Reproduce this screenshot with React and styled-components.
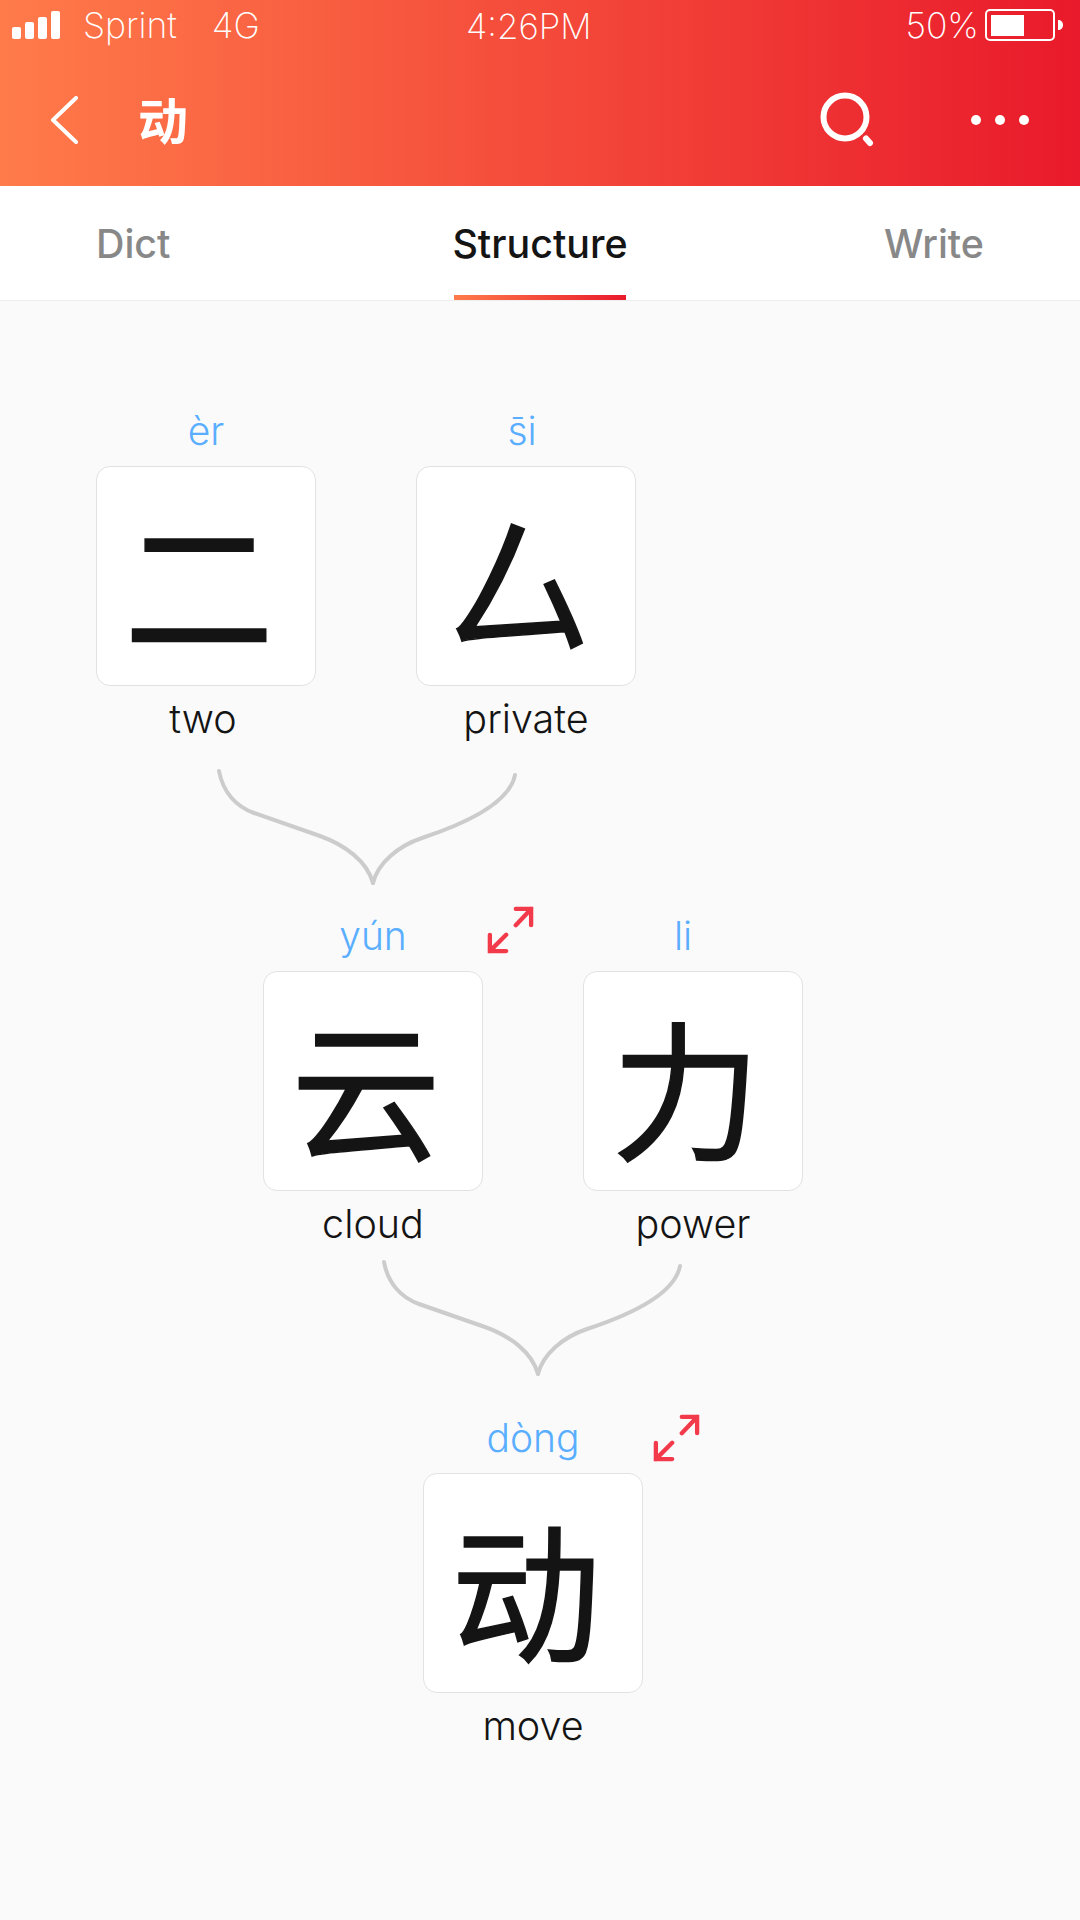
import React from 'react';
import styled, { createGlobalStyle } from 'styled-components';

const GlobalStyle = createGlobalStyle`
  html, body {
    margin: 0;
    padding: 0;
    background: #fafafa;
  }
  * {
    box-sizing: border-box;
  }
`;

const Page = styled.div`
  width: 1080px;
  height: 1920px;
  overflow: hidden;
  background: #fafafa;
  font-family: Inter, "Liberation Sans", "Noto Sans CJK SC", sans-serif;
`;

const Header = styled.header`
  height: 186px;
  background: linear-gradient(90deg, #ff7b4a 0%, #e91a2b 100%);
  color: #fff;
`;

const StatusBar = styled.div`
  height: 50px;
  display: grid;
  grid-template-columns: 1fr 1fr;
  align-items: center;
  position: relative;
  font-size: 35.5px;
  font-weight: 200;
  padding: 0 17px 0 12px;
`;

const StatusLeft = styled.div`
  display: flex;
  align-items: center;
`;

const Carrier = styled.span`
  margin-left: 23px;
`;

const Network = styled.span`
  margin-left: 35px;
`;

const Clock = styled.span`
  position: absolute;
  left: 466px;
  top: 5px;
  font-size: 34.8px;
`;

const StatusRight = styled.div`
  display: flex;
  align-items: center;
  justify-content: flex-end;
  gap: 6px;
`;

const NavBar = styled.div`
  height: 136px;
  display: flex;
  align-items: center;
  padding: 4px 50px 0 50px;
`;

const NavTitle = styled.h1`
  margin: -4px 0 0 60px;
  font-family: "Noto Sans CJK SC", sans-serif;
  font-size: 50px;
  font-weight: 700;
  flex: 1;
`;

const NavActions = styled.div`
  display: flex;
  align-items: center;
  gap: 94px;
`;

const Tabs = styled.nav`
  height: 115px;
  display: grid;
  grid-template-columns: 1fr auto 1fr;
  align-items: center;
  padding: 0 96px;
  background: #fff;
  border-bottom: 1px solid #eeeeee;
`;

const Tab = styled.div`
  position: relative;
  height: 100%;
  display: flex;
  align-items: center;
  justify-self: ${(p) => p.$align};
  padding-top: 2px;
  font-size: 39.4px;
  font-weight: 450;
  color: ${(p) => (p.$active ? '#141414' : '#888888')};

  ${(p) =>
    p.$active &&
    `&::after {
      content: '';
      position: absolute;
      left: 2px;
      right: 2px;
      bottom: 0;
      height: 5px;
      background: linear-gradient(90deg, #ff7b4a 0%, #e91a2b 100%);
    }`}
`;

const Tree = styled.main`
  padding-top: 109px;
`;

const Row = styled.div`
  display: flex;
  gap: 100px;
  padding-left: ${(p) => p.$indent}px;
`;

const Node = styled.div`
  position: relative;
  width: 220px;
  display: flex;
  flex-direction: column;
  align-items: center;
`;

const Pinyin = styled.div`
  height: 56px;
  line-height: 42px;
  font-size: 39px;
  font-weight: 300;
  color: #5aaeff;
  margin-left: ${(p) => p.$shift || 0}px;
`;

const Card = styled.div`
  width: 220px;
  height: 220px;
  display: flex;
  align-items: center;
  justify-content: center;
  background: #fff;
  border: 1px solid #e2e2e2;
  border-radius: 14px;
  font-family: "Noto Sans CJK SC", sans-serif;
  font-size: 150px;
  font-weight: 400;
  -webkit-text-stroke: 1.5px #141414;
  line-height: 1;
  color: #141414;
  padding: 6px 14px 0 0;
`;

const Meaning = styled.div`
  height: 56px;
  line-height: 54px;
  margin-top: 6px;
  font-size: 39.5px;
  font-weight: 300;
  color: #141414;
  margin-left: ${(p) => p.$shift || 0}px;
`;

const ExpandIcon = styled.svg`
  position: absolute;
  left: ${(p) => p.$left}px;
  top: ${(p) => p.$top}px;
  width: 47px;
  height: 48px;
`;

const Brace = styled.svg`
  display: block;
  width: 304px;
  height: 124px;
  margin-left: ${(p) => p.$left}px;
  margin-top: ${(p) => p.$top}px;
  margin-bottom: ${(p) => p.$bottom}px;
`;

const SignalBars = () => (
  <svg width="48" height="28" viewBox="0 0 48 28" fill="#fff">
    <rect x="0" y="16" width="9" height="12" rx="2" />
    <rect x="13" y="11" width="9" height="17" rx="2" />
    <rect x="26" y="6" width="9" height="22" rx="2" />
    <rect x="39" y="0" width="9" height="28" rx="2" />
  </svg>
);

const Battery = () => (
  <svg width="78" height="32" viewBox="0 0 78 32">
    <rect x="1" y="1" width="68" height="30" rx="4" fill="none" stroke="#fff" strokeWidth="2" />
    <rect x="6" y="6" width="33" height="21" fill="#fff" />
    <path d="M73 11 C76 11 78 13 78 16 C78 19 76 21 73 21 Z" fill="#fff" />
  </svg>
);

const BackIcon = () => (
  <svg width="28" height="48" viewBox="0 0 28 48" fill="none" stroke="#fff" strokeWidth="4" strokeLinecap="round" strokeLinejoin="round">
    <path d="M26 2 L3 24 L26 46" />
  </svg>
);

const SearchIcon = () => (
  <svg width="56" height="56" viewBox="0 0 56 56" fill="none" stroke="#fff">
    <circle cx="25" cy="25" r="21.5" strokeWidth="6" />
    <path d="M46 46.5 L50 51" strokeWidth="6" strokeLinecap="round" />
  </svg>
);

const MoreIcon = () => (
  <svg width="60" height="12" viewBox="0 0 60 12" fill="#fff">
    <circle cx="6" cy="6" r="5" />
    <circle cx="30" cy="6" r="5" />
    <circle cx="54" cy="6" r="5" />
  </svg>
);

const Expand = ({ left, top }) => (
  <ExpandIcon $left={left} $top={top} viewBox="0 0 49 50" fill="none" stroke="#f23a4b" strokeWidth="4.5" strokeLinecap="round" strokeLinejoin="miter">
    <path d="M30 3 H46 V20 M46 3 L30 20" />
    <path d="M3 30 V47 H20 M3 47 L20 30" />
  </ExpandIcon>
);

const Connector = ({ left, top, bottom }) => (
  <Brace $left={left} $top={top} $bottom={bottom} viewBox="0 0 304 124" fill="none" stroke="#cccccc" strokeWidth="4" strokeLinecap="round">
    <path d="M4 5 C8 27 22 41 39 47 L105 70 C130 79 152 95 158 117" />
    <path d="M300 9 C296 30 268 52 207 72 C183 80 163 97 158 117" />
  </Brace>
);

const CharNode = ({ pinyin, glyph, meaning, pinyinShift, meaningShift, expand }) => (
  <Node>
    <Pinyin $shift={pinyinShift}>{pinyin}</Pinyin>
    <Card>{glyph}</Card>
    <Meaning $shift={meaningShift}>{meaning}</Meaning>
    {expand && <Expand left={expand[0]} top={expand[1]} />}
  </Node>
);

export default function App() {
  return (
    <Page>
      <GlobalStyle />
      <Header>
        <StatusBar>
          <StatusLeft>
            <SignalBars />
            <Carrier>Sprint</Carrier>
            <Network>4G</Network>
          </StatusLeft>
          <Clock>4:26PM</Clock>
          <StatusRight>
            <span>50%</span>
            <Battery />
          </StatusRight>
        </StatusBar>
        <NavBar>
          <BackIcon />
          <NavTitle>动</NavTitle>
          <NavActions>
            <SearchIcon />
            <MoreIcon />
          </NavActions>
        </NavBar>
      </Header>

      <Tabs>
        <Tab $align="start">Dict</Tab>
        <Tab $align="center" $active>Structure</Tab>
        <Tab $align="end">Write</Tab>
      </Tabs>

      <Tree>
        <Row $indent={96}>
          <CharNode pinyin="èr" glyph="二" meaning="two" meaningShift={-6} />
          <CharNode pinyin={'s\u0304i'} glyph="厶" meaning="private" pinyinShift={-8} />
        </Row>
        <Connector left={215} top={18} bottom={25} />
        <Row $indent={263}>
          <CharNode pinyin="yún" glyph="云" meaning="cloud" expand={[224, -9]} />
          <CharNode pinyin="li" glyph="力" meaning="power" pinyinShift={-20} />
        </Row>
        <Connector left={380} top={4} bottom={36} />
        <Row $indent={423}>
          <CharNode pinyin="dòng" glyph="动" meaning="move" expand={[230, -3]} />
        </Row>
      </Tree>
    </Page>
  );
}
